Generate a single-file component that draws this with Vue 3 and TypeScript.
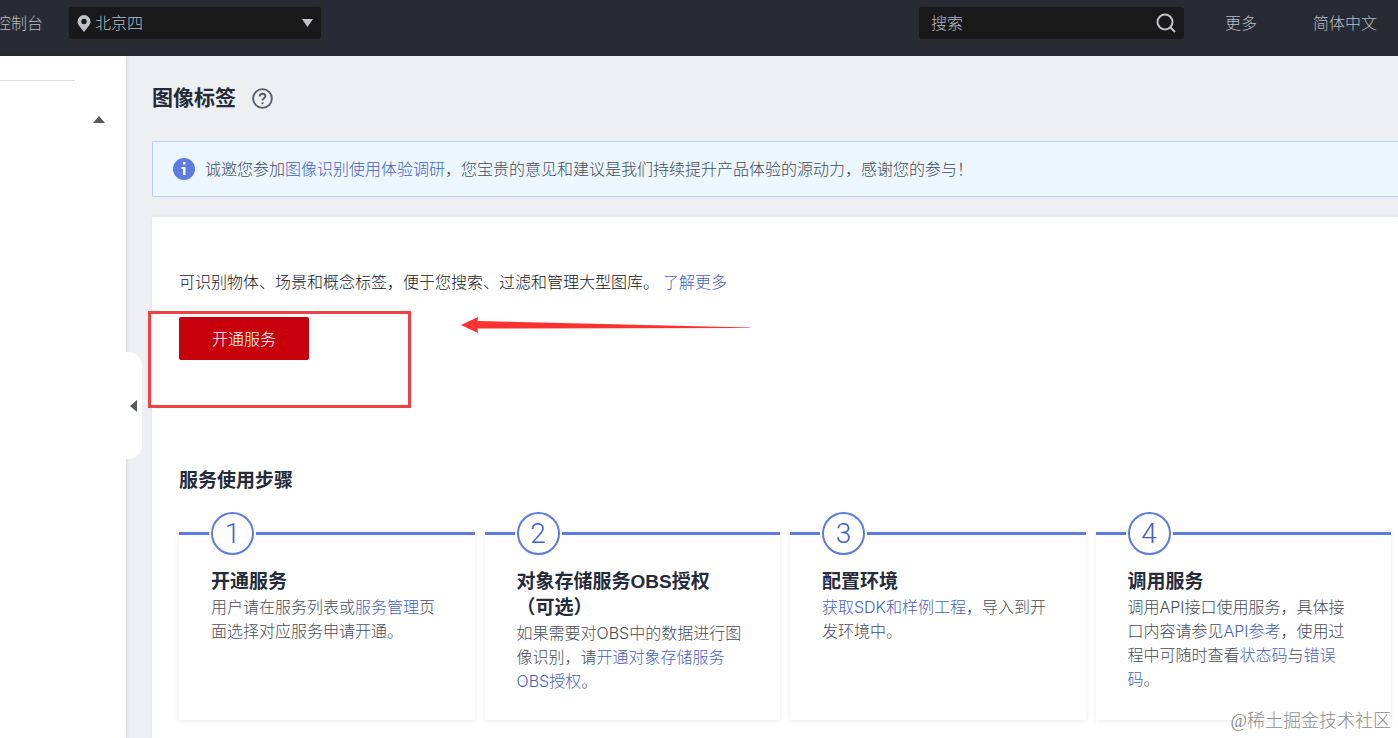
<script setup lang="ts">
import { ref } from 'vue'

interface Part {
  text: string
  link?: boolean
}

interface Step {
  title: string
  suffix?: string
  parts: Part[]
}

const region = ref('北京四')
const keyword = ref('')

const steps: Step[] = [
  {
    title: '开通服务',
    parts: [
      { text: '用户请在服务列表或' },
      { text: '服务管理', link: true },
      { text: '页面选择对应服务申请开通。' },
    ],
  },
  {
    title: '对象存储服务OBS授权',
    suffix: '（可选）',
    parts: [
      { text: '如果需要对OBS中的数据进行图像识别，请' },
      { text: '开通对象存储服务OBS授权', link: true },
      { text: '。' },
    ],
  },
  {
    title: '配置环境',
    parts: [{ text: '获取SDK和样例工程', link: true }, { text: '，导入到开发环境中。' }],
  },
  {
    title: '调用服务',
    parts: [
      { text: '调用API接口使用服务，具体接口内容请参见' },
      { text: 'API参考', link: true },
      { text: '，使用过程中可随时查看' },
      { text: '状态码', link: true },
      { text: '与' },
      { text: '错误码', link: true },
      { text: '。' },
    ],
  },
]
</script>

<template>
  <div class="page" lang="zh-CN">
    <header class="topbar">
      <a class="console" href="#">控制台</a>
      <div class="region">
        <svg class="pin" viewBox="0 0 14 17" aria-hidden="true">
          <path fill-rule="evenodd" d="M7 0a6.5 6.5 0 0 0-6.5 6.5C.5 10 4 13 7 17c3-4 6.5-7 6.5-10.5A6.5 6.5 0 0 0 7 0zM7 3.800a2.700 2.700 0 1 1 0 5.400a2.700 2.700 0 0 1 0-5.400z" />
        </svg>
        <select v-model="region" aria-label="区域">
          <option>北京四</option>
        </select>
        <svg class="caret" viewBox="0 0 12 8" aria-hidden="true"><path d="M1 0h11L6.500 8z" /></svg>
      </div>
      <div class="search">
        <input v-model="keyword" type="text" placeholder="搜索" aria-label="搜索" />
        <button type="button" aria-label="搜索">
          <svg viewBox="0 0 20 20" aria-hidden="true">
            <circle cx="9" cy="9" r="7.500" />
            <path d="M14.500 14.500L19 19" />
          </svg>
        </button>
      </div>
      <nav class="links">
        <a href="#">更多</a>
        <a href="#">简体中文</a>
      </nav>
    </header>

    <div class="body">
      <aside class="sidebar">
        <hr />
        <button class="fold" type="button" aria-label="收起分组">
          <svg viewBox="0 0 12 7" aria-hidden="true"><path d="M6 0l6 7H0z" /></svg>
        </button>
        <button class="collapse" type="button" aria-label="收起侧栏">
          <svg viewBox="0 0 7 12" aria-hidden="true"><path d="M7 0v12L0 6z" /></svg>
        </button>
      </aside>

      <main class="main">
        <div class="heading">
          <h1>图像标签</h1>
          <button class="help" type="button" aria-label="帮助">
            <svg viewBox="0 0 22 22" aria-hidden="true">
              <circle cx="11" cy="11" r="9.800" />
              <path d="M8 9C8 7 9.300 6 11 6s3 1 3 2.600c0 2-3 2.200-3 4.600" />
              <path d="M11 15v2" />
            </svg>
          </button>
        </div>

        <div class="notice">
          <svg viewBox="0 0 22 22" aria-hidden="true">
            <circle cx="11" cy="11" r="11" fill="#5e7ce0" />
            <path d="M10 4h2.500v2.500H10zM8.500 9h4v8H10v-6H8.500z" fill="#fff" />
          </svg>
          <p>诚邀您参加<a href="#">图像识别使用体验调研</a>，您宝贵的意见和建议是我们持续提升产品体验的源动力，感谢您的参与！</p>
        </div>

        <section class="panel">
          <p class="intro">可识别物体、场景和概念标签，便于您搜索、过滤和管理大型图库。<a href="#">了解更多</a></p>
          <div class="action">
            <button class="primary" type="button">开通服务</button>
            <div class="mark"></div>
            <svg class="arrow" viewBox="0 0 290 16" aria-hidden="true">
              <path d="M0 8L17 0l-.5 4L289 10.500v.5L16.500 11.500l.5 4.500z" />
            </svg>
          </div>

          <h2>服务使用步骤</h2>
          <ol class="steps">
            <li v-for="(step, i) in steps" :key="step.title">
              <span class="number">{{ i + 1 }}</span>
              <h3>{{ step.title }}<span v-if="step.suffix">{{ step.suffix }}</span></h3>
              <p><template v-for="(part, j) in step.parts" :key="j"><a v-if="part.link" href="#">{{ part.text }}</a><template v-else>{{ part.text }}</template></template></p>
            </li>
          </ol>
        </section>
      </main>
    </div>
    <div class="watermark">@稀土掘金技术社区</div>
  </div>
</template>

<style>
body {
  margin: 0;
}
</style>

<style scoped>
.page {
  position: relative;
  display: flex;
  flex-direction: column;
  min-height: 100vh;
  overflow: hidden;
  background: #eeeff3;
  color: #464c5a;
  font: 300 16px/24px Inter, "Noto Sans CJK SC", sans-serif;
}

* {
  box-sizing: border-box;
}

h1, h2, h3, p, ol {
  margin: 0;
  padding: 0;
}

h1, h2, h3 {
  color: #252b3a;
  font-family: "Liberation Sans", "Noto Sans CJK SC", sans-serif;
  font-weight: 700;
}

a {
  color: #4561c4;
  text-decoration: none;
}

button, input, select {
  font: inherit;
  border: 0;
  padding: 0;
  background: none;
}

svg {
  display: block;
}

.topbar {
  display: flex;
  align-items: flex-start;
  height: 56px;
  padding: 7px 21px 0 0;
  background: #282b33;
}

.topbar a {
  color: #b8bbc3;
  line-height: 32px;
  white-space: nowrap;
}

.console {
  display: flex;
  justify-content: flex-end;
  width: 43px;
  overflow: hidden;
}

.region {
  display: flex;
  align-items: center;
  width: 252px;
  height: 32px;
  margin-left: 26px;
  padding: 0 8px;
  border-radius: 3px;
  background: #191919;
}

.region svg {
  fill: #bfc1c6;
}

.pin {
  width: 14px;
  height: 17px;
}

.caret {
  width: 12px;
  height: 8px;
}

.region select {
  flex: 1;
  appearance: none;
  height: 32px;
  margin-left: 4px;
  color: #b8bbc3;
}

.search {
  display: flex;
  align-items: center;
  width: 265px;
  height: 32px;
  margin-left: auto;
  padding: 0 8px 0 12px;
  border-radius: 3px;
  background: #191919;
}

.search input {
  flex: 1;
  min-width: 0;
  height: 32px;
  color: #b8bbc3;
  outline: 0;
}

.search input::placeholder {
  color: #b8bbc3;
  opacity: 1;
}

.search svg {
  width: 20px;
  height: 20px;
  fill: none;
  stroke: #bfc1c6;
  stroke-width: 2;
}

.links {
  display: flex;
  gap: 56px;
  margin-left: 41px;
}

.body {
  display: flex;
  flex: 1;
}

.sidebar {
  position: relative;
  flex: none;
  width: 126px;
  padding-top: 24px;
  background: #fff;
  box-shadow: 1px 0 4px rgba(40, 43, 51, 0.12);
}

.sidebar hr {
  width: 75px;
  height: 1px;
  margin: 0;
  border: 0;
  background: #dddee1;
}

.fold {
  display: block;
  margin: 35px 21px 0 auto;
}

.fold svg {
  width: 12px;
  height: 7px;
  fill: #575a60;
}

.collapse {
  position: absolute;
  top: 296px;
  left: 100%;
  display: flex;
  align-items: center;
  width: 16px;
  height: 107px;
  padding-left: 4px;
  border-radius: 0 14px 14px 0;
  background: #fff;
}

.collapse svg {
  width: 7px;
  height: 12px;
  fill: #575a60;
}

.main {
  display: flex;
  flex: 1;
  flex-direction: column;
  min-width: 0;
  padding: 27px 0 0 26px;
}

.heading {
  display: flex;
  align-items: center;
  gap: 16px;
  height: 30px;
}

h1 {
  font-size: 21px;
  line-height: 30px;
}

.help svg {
  width: 21px;
  height: 21px;
  fill: none;
  stroke: #575d6c;
  stroke-width: 2;
}

.notice {
  display: flex;
  align-items: center;
  gap: 10px;
  min-height: 56px;
  margin: 28px 0 20px;
  padding: 0 20px;
  border: 1px solid #beccfa;
  border-right: 0;
  border-radius: 2px 0 0 2px;
  background: #ebf6ff;
}

.notice svg {
  flex: none;
  width: 22px;
  height: 22px;
}

.panel {
  flex: 1;
  padding: 53px 7px 18px 27px;
  background: #fff;
  box-shadow: 0 0 4px rgba(40, 43, 51, 0.08);
}

.intro {
  color: #141823;
}

.intro a {
  margin-left: 4px;
}

.action {
  position: relative;
  margin-top: 23px;
}

.primary {
  display: block;
  width: 130px;
  height: 43px;
  border-radius: 2px;
  background: #c7000b;
  color: #fff;
}

.mark {
  position: absolute;
  top: -6px;
  left: -31px;
  width: 263px;
  height: 97px;
  border: 3px solid #f04142;
  pointer-events: none;
}

.arrow {
  position: absolute;
  top: 0;
  left: 282px;
  width: 290px;
  height: 16px;
  fill: #fb3232;
}

h2 {
  margin-top: 107px;
  font-size: 19px;
  line-height: 28px;
}

.steps {
  display: grid;
  grid-template-columns: repeat(4, 1fr);
  gap: 10px;
  margin-top: 37px;
  list-style: none;
}

.steps li {
  min-height: 188px;
  padding: 0 32px 24px;
  border-top: 3px solid #5e7ce0;
  background: #fff;
  box-shadow: 0 1px 5px rgba(40, 43, 51, 0.1);
}

.number {
  display: flex;
  align-items: center;
  justify-content: center;
  width: 43px;
  height: 43px;
  margin: -23px 0 14px;
  border: 2px solid #5e7ce0;
  border-radius: 50%;
  background: #fff;
  box-shadow: 0 0 0 2px #fff;
  color: #4561c4;
  font-family: Roboto, sans-serif;
  font-size: 28px;
  line-height: 40px;
}

h3 {
  font-size: 19px;
  line-height: 26px;
}

h3 span {
  display: inline-block;
}

.watermark {
  position: absolute;
  right: 7px;
  bottom: 5px;
  color: #8c8c8c;
  font-family: "Liberation Serif", "Noto Sans CJK SC", serif;
  font-size: 18px;
  text-shadow: 0 0 2px #fff;
}
</style>
